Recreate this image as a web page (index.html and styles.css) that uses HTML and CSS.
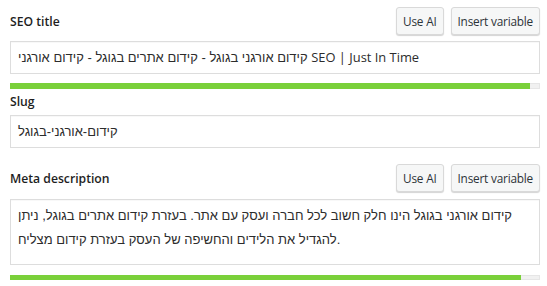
FILE: index.html
```html
<!DOCTYPE html>
<html lang="en">
<head>
<meta charset="utf-8">
<title>SEO fields</title>
<link rel="stylesheet" href="styles.css">
</head>
<body>
<div class="editor">
  <section class="field field-title">
    <div class="field-head">
      <label class="field-label">SEO title</label>
      <div class="actions">
        <button class="btn">Use AI</button>
        <button class="btn">Insert variable</button>
      </div>
    </div>
    <div class="input">קידום אורגני בגוגל - קידום אתרים בגוגל - קידום אורגני <span class="latin">SEO | Just In Time</span></div>
    <div class="progress"><div class="progress-fill" style="width: 98.3%"></div></div>
  </section>

  <section class="field field-slug">
    <div class="field-head">
      <label class="field-label">Slug</label>
    </div>
    <div class="input">קידום-אורגני-בגוגל</div>
  </section>

  <section class="field field-meta">
    <div class="field-head">
      <label class="field-label">Meta description</label>
      <div class="actions">
        <button class="btn">Use AI</button>
        <button class="btn">Insert variable</button>
      </div>
    </div>
    <div class="input textarea">קידום אורגני בגוגל הינו חלק חשוב לכל חברה ועסק עם אתר. בעזרת קידום אתרים בגוגל, ניתן להגדיל את הלידים והחשיפה של העסק בעזרת קידום מצליח.</div>
    <div class="progress"><div class="progress-fill" style="width: 96.6%"></div></div>
  </section>
</div>
</body>
</html>
```
FILE: styles.css
```css
* { box-sizing: border-box; }

html, body {
  margin: 0;
  padding: 0;
  background: #ffffff;
}

body {
  font-family: "Open Sans", "Liberation Sans", sans-serif;
  font-size: 13px;
  color: #1e1e1e;
}

.editor {
  width: 530px;
  margin-left: 10px;
  padding-top: 7px;
  display: flex;
  flex-direction: column;
}

.field-head {
  display: flex;
  justify-content: space-between;
  align-items: flex-end;
}

.field-label {
  font-family: "Open Sans", sans-serif;
  font-weight: 600;
  font-size: 12.2px;
  line-height: 18px;
  color: #1e1e1e;
  padding-bottom: 4px;
}

.actions {
  display: flex;
  gap: 7px;
}

.btn {
  font-family: "Open Sans", sans-serif;
  font-size: 11.8px;
  letter-spacing: -0.2px;
  color: #2c3338;
  height: 28px;
  padding: 0 6px;
  background: #f6f7f7;
  border: 1px solid #d9d9d9;
  border-radius: 3px;
  box-shadow: 0 1px 1px #d4d4d4;
  line-height: 26px;
}

.input {
  margin-top: 6px;
  height: 33px;
  border: 1px solid #dddddd;
  padding: 0 7px;
  line-height: 31px;
  font-family: "Liberation Sans", "DejaVu Sans", sans-serif;
  font-size: 13px;
  color: #2c2c2c;
  white-space: nowrap;
  overflow: hidden;
  box-shadow: inset 0 1px 1px rgba(0,0,0,0.03);
}

.latin {
  font-family: "Open Sans", sans-serif;
  font-size: 12.9px;
}

.textarea {
  margin-top: 7px;
  height: 66px;
  white-space: normal;
  line-height: 24px;
  padding: 4px 6px 4px 7px;
}

.progress {
  margin-top: 9px;
  height: 6px;
  background: #f1f1f1;
  border: 1px solid #e6e6e6;
  border-left: none;
}

.progress-fill {
  margin-top: -1px;
  height: 6px;
  background: #7ad03a;
}

.field-slug {
  margin-top: 4px;
}

.field-slug .field-label {
  padding-bottom: 0;
}

.field-slug .input {
  margin-top: 4px;
}

.field-meta {
  margin-top: 16px;
}

.field-meta .progress {
  margin-top: 10px;
  height: 5px;
}

.field-meta .progress-fill {
  height: 5px;
}
```
